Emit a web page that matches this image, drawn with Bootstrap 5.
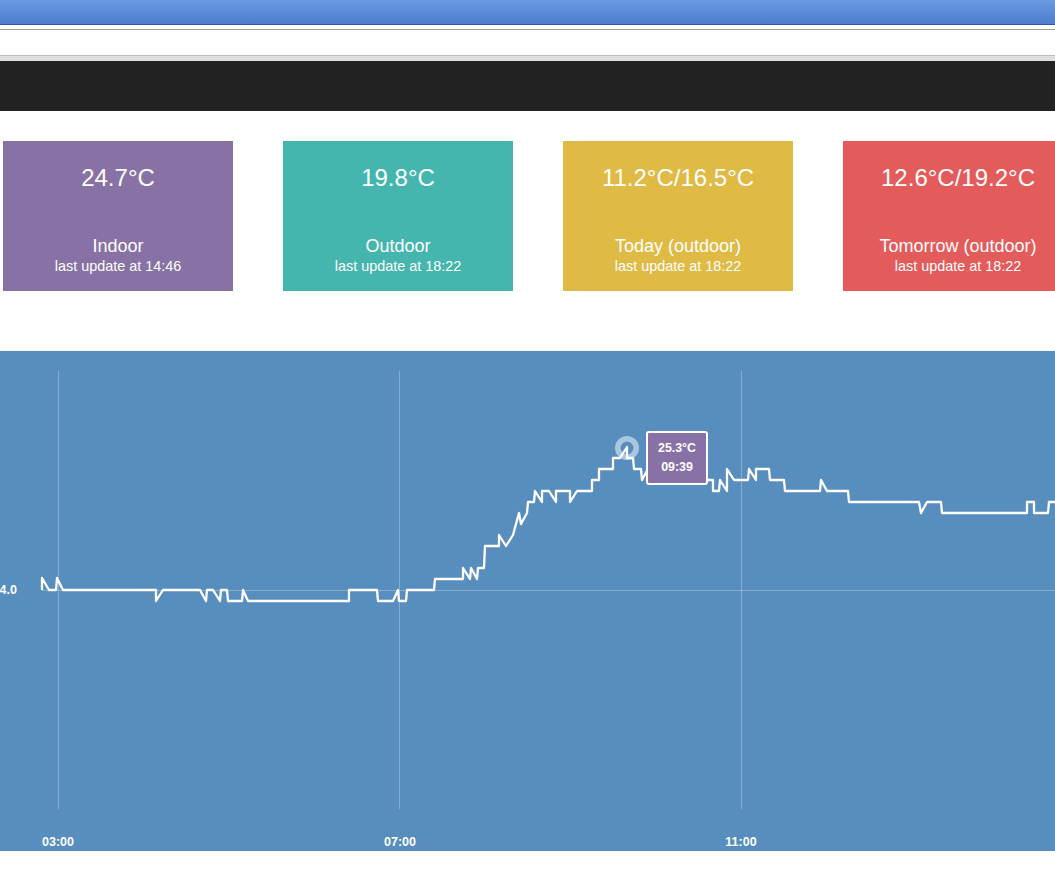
<!DOCTYPE html>
<html lang="en">
<head>
<meta charset="utf-8">
<title>Temperature dashboard</title>
<link href="https://cdn.jsdelivr.net/npm/bootstrap@5.3.0/dist/css/bootstrap.min.css" rel="stylesheet">
<style>
html, body { overflow: hidden; height: 878px; background: #fff; font-family: "Liberation Sans", Arial, sans-serif; }
.title-strip { height: 25px; background: linear-gradient(#6a9ae4, #4e7ccf); border-bottom: 1px solid #33589f; }
.url-strip { height: 27px; margin-top: 4px; background: #fff; border-top: 1px solid #9a9a9a; border-bottom: 1px solid #bdbdbd; }
.tab-strip { height: 5px; background: #dedede; }
.dark-strip { height: 50px; background: #222; }
.tile-row { margin-top: 30px; margin-left: 3px; width: 1100px; gap: 50px; }
.stat-tile { width: 230px; height: 150px; flex: 0 0 230px; color: #fff; text-align: center; }
.stat-value { font-size: 24px; line-height: 28px; margin-top: 23px; }
.stat-name { font-size: 18px; line-height: 20px; margin-top: 44px; }
.stat-sub { font-size: 14.4px; line-height: 16px; margin-top: 2px; }
.tile-purple { background: #8872a5; }
.tile-teal { background: #44b6ae; }
.tile-yellow { background: #dfba45; }
.tile-red { background: #e35b5a; }
.chart-box { margin-top: 60px; height: 500px; background: #578ebe; position: relative; overflow: hidden; }
.chart-box svg { display: block; }
.axis-text { font: bold 12.5px "Liberation Sans", Arial, sans-serif; fill: #fff; }
.chart-tip { position: absolute; left: 646px; top: 80px; width: 62px; height: 54px; background: #8872a5; border: 2px solid #fff; border-radius: 3px; color: #fff; font-size: 12.4px; font-weight: 700; line-height: 19px; text-align: center; padding-top: 6px; }
</style>
</head>
<body>
<div class="title-strip"></div>
<div class="url-strip"></div>
<div class="tab-strip"></div>
<div class="dark-strip"></div>

<div class="d-flex tile-row">
  <div class="stat-tile tile-purple">
    <div class="stat-value">24.7°C</div>
    <div class="stat-name">Indoor</div>
    <div class="stat-sub">last update at 14:46</div>
  </div>
  <div class="stat-tile tile-teal">
    <div class="stat-value">19.8°C</div>
    <div class="stat-name">Outdoor</div>
    <div class="stat-sub">last update at 18:22</div>
  </div>
  <div class="stat-tile tile-yellow">
    <div class="stat-value">11.2°C/16.5°C</div>
    <div class="stat-name">Today (outdoor)</div>
    <div class="stat-sub">last update at 18:22</div>
  </div>
  <div class="stat-tile tile-red">
    <div class="stat-value">12.6°C/19.2°C</div>
    <div class="stat-name">Tomorrow (outdoor)</div>
    <div class="stat-sub">last update at 18:22</div>
  </div>
</div>

<div class="chart-box">
  <svg width="1055" height="500" viewBox="0 351 1055 500" xmlns="http://www.w3.org/2000/svg">
    <g stroke="#fff" stroke-opacity=".28" stroke-width="1">
      <line x1="58.5" y1="371" x2="58.5" y2="809"/>
      <line x1="399.5" y1="371" x2="399.5" y2="809"/>
      <line x1="741.5" y1="371" x2="741.5" y2="809"/>
      <line x1="42" y1="590.5" x2="1055" y2="590.5"/>
    </g>
    <circle cx="627" cy="448" r="9.2" fill="none" stroke="#fff" stroke-opacity=".5" stroke-width="5.6"/>
    <polyline fill="none" stroke="#fff" stroke-width="2.3" stroke-linejoin="round" points="42,590 42,578 49,590 56,590 57,578 63,590 156,590 156,601 163,590 200,590 206,601 207,590 213,590 220,601 221,590 227,590 228,601 242,601 243,590 248,601 349,601 349,590 377,590 378,601 393,601 398,590 399,601 406,601 407,590 434,590 435,579 463,579 463,568 470,579 471,568 477,579 478,568 484,568 485,546 499,546 499,535 506,546 513,535 519,513 521,524 527,513 528,502 534,502 535,491 542,502 542,491 549,491 556,502 556,491 570,491 570,502 577,491 592,491 592,480 599,480 599,469 613,469 613,458 620,458 627,447 627,458 633,458 634,469 641,469 642,480 648,469 706,480 713,480 713,491 719,491 720,480 727,491 727,469 734,480 748,480 749,469 756,480 756,469 769,469 770,480 784,480 785,491 820,491 821,480 827,491 848,491 849,502 919,502 921,513 927,502 941,502 942,513 1027,513 1027,502 1034,502 1034,513 1048,513 1049,502 1055,502"/>
    <text class="axis-text" x="17" y="594" text-anchor="end">4.0</text>
    <text class="axis-text" x="58" y="846" text-anchor="middle">03:00</text>
    <text class="axis-text" x="400" y="846" text-anchor="middle">07:00</text>
    <text class="axis-text" x="741" y="846" text-anchor="middle">11:00</text>
  </svg>
  <div class="chart-tip">25.3°C<br>09:39</div>
</div>

<script src="https://cdn.jsdelivr.net/npm/bootstrap@5.3.0/dist/js/bootstrap.bundle.min.js"></script>
</body>
</html>
